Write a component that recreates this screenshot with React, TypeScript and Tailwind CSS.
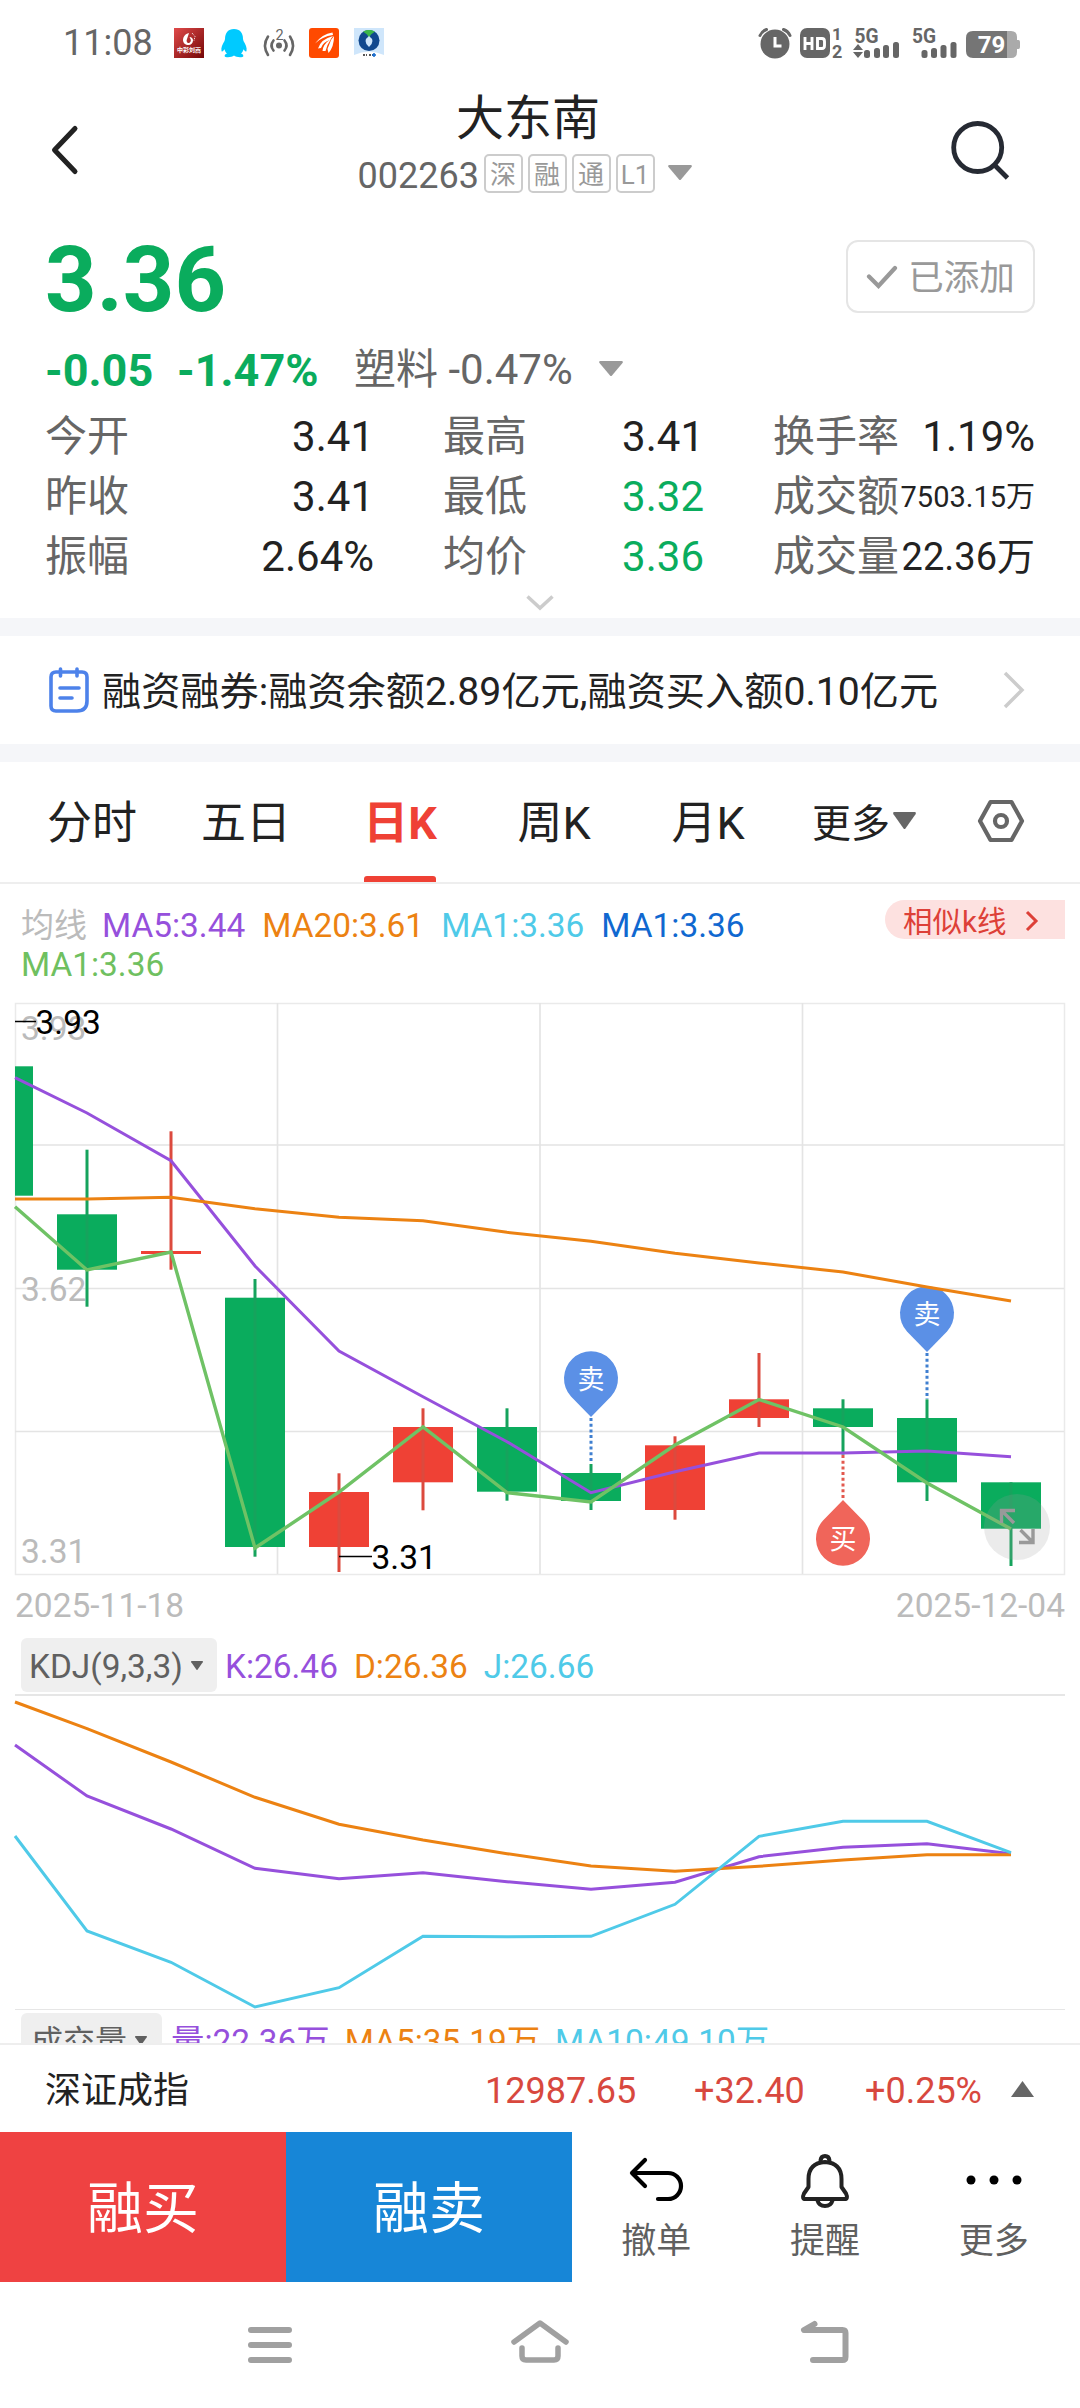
import type { ReactNode } from "react";

const GREEN = "#0aac5d";
const RED = "#ef4135";

type Candle = { x: number; top: number; bottom: number; high: number; low: number; up?: boolean };

const candles: Candle[] = [
  { x: 3, top: 1066.3, bottom: 1195.7, high: 1066.3, low: 1195.7 },
  { x: 87, top: 1214.3, bottom: 1269.7, high: 1149.7, low: 1306.7 },
  { x: 171, top: 1251, bottom: 1254, high: 1131.3, low: 1269.7, up: true },
  { x: 255, top: 1297.7, bottom: 1547, high: 1279, low: 1556.7 },
  { x: 339, top: 1492, bottom: 1547, high: 1473.3, low: 1572, up: true },
  { x: 423, top: 1427, bottom: 1482.3, high: 1408.3, low: 1510.3, up: true },
  { x: 507, top: 1427, bottom: 1491.7, high: 1408.3, low: 1500.7 },
  { x: 591, top: 1473, bottom: 1501, high: 1464, low: 1510 },
  { x: 675, top: 1445.3, bottom: 1510, high: 1436.3, low: 1519.7, up: true },
  { x: 759, top: 1399.3, bottom: 1418, high: 1353, low: 1427, up: true },
  { x: 843, top: 1408.3, bottom: 1427, high: 1399.3, low: 1454.7 },
  { x: 927, top: 1418, bottom: 1482.3, high: 1399.3, low: 1501 },
  { x: 1011, top: 1482.3, bottom: 1528.7, high: 1482.3, low: 1566 },
];

const xs = [15, 87, 171, 255, 339, 423, 507, 591, 675, 759, 843, 927, 1011];
const line = (ys: number[]) => ys.map((y, i) => `${xs[i]},${y}`).join(" ");

const ma1 = line([1206.7, 1270, 1252, 1548, 1492, 1427, 1492.7, 1502, 1445, 1399.5, 1427, 1483, 1529]);
const ma5 = line([1077.7, 1113, 1160.7, 1266, 1351, 1396.7, 1441.7, 1492.7, 1471.7, 1453, 1453, 1451, 1456.7]);
const ma20 = line([1199, 1199, 1197.3, 1208.7, 1217.3, 1220.7, 1232.3, 1241.3, 1253.3, 1263, 1272, 1287, 1301]);
const kLine = line([1745, 1796, 1829, 1868.3, 1878.7, 1872.7, 1881.7, 1889.3, 1882.3, 1856.7, 1847.3, 1843.7, 1853.7]);
const dLine = line([1702, 1728.7, 1762, 1797.3, 1824.3, 1840, 1853.7, 1866, 1871.3, 1866.3, 1860, 1854.7, 1854.7]);
const jLine = line([1836, 1931, 1962.3, 2007, 1987.7, 1936.3, 1936.7, 1936.3, 1904.3, 1836.3, 1821.3, 1821.3, 1852.7]);

function Caret({ w = 24, h = 15, color = "#999", up = false }: { w?: number; h?: number; color?: string; up?: boolean }) {
  return (
    <svg width={w} height={h} viewBox="0 0 24 15" preserveAspectRatio="none" className="block shrink-0">
      <path d={up ? "M0 15h24L12 0z" : "M1 0h22q1.500 .5 .5 2L13 14.500q-1 1-2 0L.5 2Q-.5.5 1 0z"} fill={color} />
    </svg>
  );
}

function StatusBar() {
  return (
    <div className="flex h-[86px] items-center justify-between pl-[63px] pr-[60px] text-[#666]">
      <div className="flex items-center">
        <span className="w-[111px] text-[36px] leading-none">11:08</span>
        <svg width="30" height="30" viewBox="0 0 30 30" className="overflow-visible">
          <defs>
            <linearGradient id="wine" x1="0" y1="0" x2="1" y2="1">
              <stop offset="0" stopColor="#e04a4a" />
              <stop offset="1" stopColor="#740606" />
            </linearGradient>
          </defs>
          <rect width="30" height="30" fill="url(#wine)" />
          <path d="M15 5c-4 1-6 4-6 7 0 3 2.500 5 5.500 5 2.500 0 4.500-2 4.500-4.500 0-2-1.500-3.500-3.500-3.500l1 2c1 2-.5 4-2 4s-2.500-2-1.500-4z" fill="#fff" />
          <path d="M18 5l3 3.500-1 4" stroke="#fff" strokeWidth="1" strokeDasharray="1 1" fill="none" />
          <text x="15" y="23.500" textAnchor="middle" fontSize="6" fontWeight="700" fill="#fff">中彩刘嵩</text>
        </svg>
        <svg width="28" height="30" viewBox="0 0 28 30" className="ml-4">
          <path d="M14 1C8 1 5 5 5 11l-.5 2C2.500 16 .8 20 1.500 23c.6 1.400 2-.2 3-1.700.4 1.800 1.300 3.200 2.500 4.300-1.500.5-2.500 1.300-2.300 2.600C5 29.600 12 29.500 14 27.500c2 2 9 2.100 9.300.7.200-1.300-.8-2.100-2.300-2.600 1.200-1.100 2.100-2.500 2.500-4.300 1 1.500 2.400 3.100 3 1.700.7-3-1-7-3-10l-.5-2c0-6-3-10-9-10z" fill="#00caff" />
        </svg>
        <svg width="32" height="32" viewBox="0 0 32 32" fill="none" stroke="#666" strokeWidth="2.600" strokeLinecap="round" className="ml-[15px] overflow-visible">
          <circle cx="16" cy="18.500" r="3" fill="#666" stroke="none" />
          <path d="M10.500 13.500q-4 5 0 10M21.500 13.500q4 5 0 10M5 9.500q-6 9 0 18.500M27 9.500q6 9 0 18.500" />
          <text x="16.500" y="12.500" textAnchor="middle" fontSize="14.500" fill="#666" stroke="none">2</text>
        </svg>
        <svg width="30" height="30" viewBox="0 0 30 30" className="ml-[14px]">
          <rect width="30" height="30" rx="3" fill="#ff4a00" />
          <path d="M6 15.500Q13 6 23.500 4.500L24 7Q13 8.500 6 15.500z" fill="#fff" />
          <path d="M9 20.500Q12 11 24 8L21 12Q14 14 12 20z" fill="#fff" />
          <path d="M13.500 23Q14 16 22 11L18.500 17l-2 6z" fill="#fff" />
          <path d="M19.500 25l-1-4L22 12l3-4q0 11-5.500 17z" fill="#fff" />
        </svg>
        <svg width="30" height="30" viewBox="0 0 30 30" className="ml-[15px]">
          <rect width="30" height="27" fill="#cfe6fb" />
          <path d="M0 27Q15 20 30 27v3H0z" fill="#fff" />
          <circle cx="15" cy="12.500" r="10.500" fill="#11488e" />
          <path d="M9 3.500L13 2h4l4 1.500-4 3-2 3-2-3z" fill="#3bb54a" />
          <path d="M15 8q7 5 0 11-7-6 0-11z" fill="#cfe6fb" />
          <path d="M9 27h4M15 27h4" stroke="#222" strokeWidth="1.500" strokeDasharray="2 1" />
          <path d="M18 27h4M20 25v4" stroke="#1268cc" strokeWidth="1.500" />
        </svg>
      </div>
      <div className="flex items-center">
        <svg width="34" height="32" viewBox="0 0 34 32" className="mr-[8px]">
          <circle cx="17" cy="17" r="14.500" fill="#666" />
          <path d="M2 8.500Q4 4 8.500 2.500M32 8.500Q30 4 25.500 2.500" stroke="#666" strokeWidth="3" fill="none" strokeLinecap="round" />
          <path d="M17 10v9h6.500" stroke="#fff" strokeWidth="3" fill="none" />
        </svg>
        <svg width="43" height="32" viewBox="0 0 43 32" className="mr-[10px] overflow-visible">
          <rect x="0" y="1" width="30" height="30" rx="7" fill="#666" />
          <path d="M5 10v13M12 10v13M5 16.500h7M17.500 11.500v10h4.500q2.500 0 2.500-3v-4q0-3-2.500-3z" stroke="#fff" strokeWidth="2.900" fill="none" />
          <text x="32" y="13" fontSize="17" fontWeight="700" fill="#666">1</text>
          <text x="32" y="31" fontSize="18" fontWeight="700" fill="#666">2</text>
        </svg>
        <svg width="47" height="32" viewBox="0 0 47 32" className="mr-[12px] overflow-visible" fill="#666">
          <text x="1.500" y="15.500" fontSize="20" fontWeight="700" textLength="24" lengthAdjust="spacingAndGlyphs">5G</text>
          <path d="M5 17l5 6H0zM5 31l5-6H0z" />
          <rect x="11" y="23" width="6" height="8" rx="2.500" />
          <rect x="21" y="21" width="6" height="10" rx="2.500" />
          <rect x="30" y="18" width="6" height="13" rx="2.500" />
          <rect x="40" y="15" width="6" height="16" rx="2.500" />
        </svg>
        <svg width="45" height="32" viewBox="0 0 45 32" className="mr-[9px] overflow-visible" fill="#666">
          <text x="0" y="15.500" fontSize="20" fontWeight="700" textLength="24" lengthAdjust="spacingAndGlyphs">5G</text>
          <rect x="9.500" y="23" width="6" height="8" rx="2.500" />
          <rect x="19" y="21" width="6" height="10" rx="2.500" />
          <rect x="28.500" y="18" width="6" height="13" rx="2.500" />
          <rect x="38.500" y="15" width="6" height="16" rx="2.500" />
        </svg>
        <svg width="54" height="32" viewBox="0 0 54 32" className="overflow-visible">
          <path d="M39 4h6q6 0 6 6v3h1.500q1.500 0 1.500 2v5q0 2-1.500 2H51v3q0 6-6 6h-6z" fill="#aaa" />
          <path d="M7 4h34v27H7q-7 0-7-7V11q0-7 7-7z" fill="#757575" />
          <text x="25.500" y="26" textAnchor="middle" fontSize="24" fontWeight="700" fill="#fff">79</text>
        </svg>
      </div>
    </div>
  );
}

function Header() {
  return (
    <div className="flex h-[142px] justify-between pl-[50px] pr-[69px]">
      <svg width="30" height="52" viewBox="0 0 30 52" className="mt-[38px]" fill="none" stroke="#222" strokeWidth="5" strokeLinecap="round" strokeLinejoin="round">
        <path d="M25 4.500L4.500 26 25 47.500" />
      </svg>
      <div className="ml-[20px] flex flex-col items-center pt-[8px]">
        <h1 className="ml-[7px] text-[48px] leading-[50px] text-[#222]">大东南</h1>
        <div className="mt-[10px] flex h-[39px] items-center">
          <span className="mr-[4px] mt-[4px] w-[122px] text-[36px] leading-none text-[#666]">002263</span>
          {["深", "融", "通", "L1"].map((t) => (
            <span key={t} className="mr-[5px] flex h-[39px] w-[39px] items-center justify-center rounded-[5px] border-2 border-[#ccc] pt-[2px] text-[26px] leading-none text-[#999]">{t}</span>
          ))}
          <span className="ml-[8px] mt-[-2px]"><Caret /></span>
        </div>
      </div>
      <svg width="62" height="62" viewBox="0 0 62 62" className="mt-[33px]" fill="none" stroke="#262a33" strokeWidth="4.800">
        <circle cx="28.700" cy="28.500" r="24" />
        <path d="M46 46.500L58.500 59" />
      </svg>
    </div>
  );
}

function Stat({ label, value, valueClass = "text-[42px] text-[#222]" }: { label: string; value: string; valueClass?: string }) {
  return (
    <div className="flex h-[60px] items-center justify-between whitespace-nowrap">
      <span className="text-[42px] leading-none text-[#666]">{label}</span>
      <span className={`leading-none ${valueClass}`}>{value}</span>
    </div>
  );
}

function Quote() {
  return (
    <div className="h-[390px] px-[45px]">
      <div className="flex h-[108px] items-start justify-between">
        <span className="mt-[8px] text-[90px] font-bold leading-[90px] text-[#0aac5d]">3.36</span>
        <div className="mt-[12px] flex h-[73px] w-[189px] items-center justify-center rounded-[12px] border-2 border-[#e5e5e5]">
          <svg width="32" height="24" viewBox="0 0 32 24" fill="none" stroke="#999" strokeWidth="4.200" strokeLinecap="round">
            <path d="M3 11.500l9.500 9.500L29 3" />
          </svg>
          <span className="ml-[10px] mt-[4px] text-[35.500px] leading-none text-[#999]">已添加</span>
        </div>
      </div>
      <div className="flex h-[71px] items-center pb-[3px]">
        <span className="w-[132px] text-[45px] font-bold leading-none text-[#0aac5d]">-0.05</span>
        <span className="w-[177px] text-[45px] font-bold leading-none text-[#0aac5d]">-1.47%</span>
        <span className="w-[245px] whitespace-nowrap text-[42px] leading-none text-[#666]">塑料 -0.47%</span>
        <span className="mt-[-4px]"><Caret /></span>
      </div>
      <div className="grid grid-cols-[398px_330px_262px]">
        <div className="w-[329px]"><Stat label="今开" value="3.41" /></div>
        <div className="w-[261px]"><Stat label="最高" value="3.41" /></div>
        <Stat label="换手率" value="1.19%" />
        <div className="w-[329px]"><Stat label="昨收" value="3.41" /></div>
        <div className="w-[261px]"><Stat label="最低" value="3.32" valueClass="text-[42px] text-[#0aac5d]" /></div>
        <Stat label="成交额" value="7503.15万" valueClass="text-[29px] text-[#222]" />
        <div className="w-[329px]"><Stat label="振幅" value="2.64%" /></div>
        <div className="w-[261px]"><Stat label="均价" value="3.36" valueClass="text-[42px] text-[#0aac5d]" /></div>
        <Stat label="成交量" value="22.36万" valueClass="text-[38px] text-[#222]" />
      </div>
      <svg width="28" height="16" viewBox="0 0 28 16" className="mx-auto mt-[8px] block" fill="none" stroke="#ccc" strokeWidth="3.500">
        <path d="M1.500 1.500L14 13 26.500 1.500" />
      </svg>
    </div>
  );
}

function Notice() {
  return (
    <div className="flex h-[108px] items-center pl-[48px] pr-[55px]">
      <svg width="42" height="46" viewBox="0 0 42 46" fill="none" stroke="#4d82ea" strokeWidth="3.600" strokeLinecap="round">
        <path d="M8 5h26q5 0 5 5v24q0 10-10 10H8q-5 0-5-5V10q0-5 5-5zM12.500 2v7M29 2v7M12 21h19M12 31h12" />
      </svg>
      <span className="ml-[12px] mt-[5px] whitespace-nowrap text-[39.200px] leading-none text-[#222]">融资融券:融资余额2.89亿元,融资买入额0.10亿元</span>
      <svg width="22" height="38" viewBox="0 0 22 38" className="ml-auto" fill="none" stroke="#ccc" strokeWidth="3.500">
        <path d="M2 2l17 17L2 36" />
      </svg>
    </div>
  );
}

function Tabs() {
  return (
    <div className="flex h-[122px] border-b-2 border-[#eee] pl-[15px] text-[#222]">
      {["分时", "五日", "日K", "周K", "月K"].map((t) => (
        <div key={t} className="flex w-[154px] flex-col items-center">
          <span className={t === "日K" ? "mt-[39px] h-[75px] text-[45px] font-bold leading-[45px] text-[#ef4135]" : "mt-[39px] h-[75px] text-[45px] leading-[45px]"}>{t}</span>
          {t === "日K" && <span className="h-[6px] w-[72px] rounded-t-[3px] bg-[#ef4135]" />}
        </div>
      ))}
      <div className="ml-[27px] flex h-[120px] items-center">
        <span className="mt-[4px] w-[81px] whitespace-nowrap text-[39px] leading-none">更多</span>
        <span className="mr-[61px] mt-[-4px]"><Caret w={23} color="#666" h={17} /></span>
        <svg width="48" height="44" viewBox="0 0 48 44" className="mt-[-2px]" fill="none" stroke="#666" strokeWidth="4.200" strokeLinejoin="round">
          <path d="M13.500 3h21L45 22 34.500 41h-21L3 22z" />
          <circle cx="24" cy="22" r="6" />
        </svg>
      </div>
    </div>
  );
}

function MaLegend() {
  return (
    <div className="flex h-[116px] justify-between pl-[21px] pr-[15px] pt-[22px] text-[33.400px] leading-[39px]">
      <div className="flex w-[760px] flex-wrap content-start gap-x-[17px] whitespace-nowrap">
        <span className="w-[64px] text-[33px] text-[#bbb]">均线</span>
        <span className="text-[#9650dc]">MA5:3.44</span>
        <span className="text-[#ec8212]">MA20:3.61</span>
        <span className="text-[#4fcae8]">MA1:3.36</span>
        <span className="text-[#1068d0]">MA1:3.36</span>
        <span className="text-[#6fc060]">MA1:3.36</span>
      </div>
      <div className="mt-[-6px] flex h-[39px] w-[180px] items-center rounded-l-full bg-[#fde1e0] pl-[18px] text-[29.500px] leading-none text-[#dd4038]">
        <span className="mt-[6px] whitespace-nowrap">相似k线</span>
        <svg width="14" height="22" viewBox="0 0 14 22" className="ml-[19px] mt-[2px]" fill="none" stroke="#dd4038" strokeWidth="3">
          <path d="M2 2l9 9-9 9" />
        </svg>
      </div>
    </div>
  );
}

function Pin({ x, tip, up, color, children }: { x: number; tip: number; up?: boolean; color: string; children: string }) {
  const s = up ? 1 : -1;
  const cy = tip + s * 38.500;
  return (
    <g>
      <path d={`M${x} ${tip}L${x - 20} ${tip + s * 20.500}A27 27 0 1 ${up ? 0 : 1} ${x + 20} ${tip + s * 20.500}Z`} fill={color} />
      <text x={x} y={cy + 10.500} textAnchor="middle" fontSize="27" fill="#fff">{children}</text>
    </g>
  );
}

function CandleChart() {
  return (
    <svg width="1080" height="580" viewBox="0 1000 1080 580" className="block">
      <path d="M15.500 1003.500H1064.500V1574.500H15.500Z" fill="none" stroke="#eaeaea" strokeWidth="1.500" />
      <path d="M15 1145H1064M15 1288.500H1064M15 1431.500H1064M277.500 1003V1574M540 1003V1574M802.500 1003V1574" stroke="#e4e4e4" strokeWidth="1.700" />
      <g fontSize="33.500" fill="#bbb">
        <text x="21" y="1040">3.93</text>
        <text x="21" y="1301">3.62</text>
        <text x="21" y="1563">3.31</text>
      </g>
      <clipPath id="plot"><rect x="15" y="1003" width="1050" height="572" /></clipPath>
      <g clipPath="url(#plot)">
        {candles.map((c) => (
          <g key={c.x} fill={c.up ? RED : GREEN}>
            <rect x={c.x - 30} y={c.top} width="60" height={c.bottom - c.top} />
            <rect x={c.x - 1.500} y={c.high} width="3" height={c.low - c.high} fill={c.up ? "#dc4a3e" : "#16a35d"} />
          </g>
        ))}
      </g>
      <Pin x={591} tip={1417} color="#5b90e6">卖</Pin>
      <Pin x={927} tip={1352} color="#5b90e6">卖</Pin>
      <Pin x={843} tip={1500} up color="#f0655a">买</Pin>
      <g fill="none" strokeWidth="3">
        <g strokeDasharray="3 2.700">
          <path d="M591 1418V1463M927 1353V1399" stroke="#3f7fd0" />
          <path d="M843 1455V1500" stroke="#e2584e" />
        </g>
        <polyline points={ma5} stroke="#9650dc" />
        <polyline points={ma20} stroke="#ec8212" />
        <polyline points={ma1} stroke="#6fc265" strokeWidth="3.400" />
      </g>
      <path d="M15 1021.500H36M339 1556.500H372" stroke="#000" strokeWidth="1.500" />
      <g fontSize="33.500" fill="#000">
        <text x="35.500" y="1034">3.93</text>
        <text x="371.500" y="1569">3.31</text>
      </g>
      <circle cx="1017" cy="1527" r="33" fill="#999" fillOpacity=".2" />
      <path d="M1015 1510.500H1001.500V1523M1002 1511l12 12M1019 1542.500H1033V1529M1032.500 1542l-12-12" fill="none" stroke="#999" strokeWidth="3.400" />
    </svg>
  );
}

function Chip({ children, className }: { children: string; className: string }) {
  return (
    <div className={`flex h-[54px] items-center justify-between rounded-[6px] bg-[#efefef] text-[#606060] ${className}`}>
      <span className="mt-[4px] whitespace-nowrap leading-none">{children}</span>
      <Caret w={12} h={9} color="#606060" />
    </div>
  );
}

function Indicator({ children, className }: { children: ReactNode; className: string }) {
  return <div className={`flex items-start pl-[21px] text-[33.400px] ${className}`}>{children}</div>;
}

function Action({ label, children }: { label: string; children: ReactNode }) {
  return (
    <div className="flex flex-1 flex-col items-center pt-[19px]">
      <svg width="58" height="60" viewBox="0 0 58 60" fill="none" stroke="#111" strokeWidth="4.200" strokeLinecap="round" strokeLinejoin="round">{children}</svg>
      <span className="mt-[13px] text-[35px] leading-[36px] text-[#606060]">{label}</span>
    </div>
  );
}

function BottomBar() {
  return (
    <div>
      <div className="flex h-[89px] items-center border-t-2 border-[#eee] pl-[45px] pr-[46px] pt-[4px] text-[36px] leading-none text-[#d8483e]">
        <span className="w-[440px] text-[#222]">深证成指</span>
        <span className="w-[209px]">12987.65</span>
        <span className="w-[171px]">+32.40</span>
        <span>+0.25%</span>
        <span className="ml-auto mt-[-4px]"><Caret w={23} h={16} color="#666" up /></span>
      </div>
      <div className="flex h-[150px]">
        <button className="w-[286px] bg-[#ef4242] pt-[4px] text-[56px] leading-none text-white">融买</button>
        <button className="w-[286px] bg-[#1786d7] pt-[4px] text-[56px] leading-none text-white">融卖</button>
        <div className="flex flex-1 pr-[2px]">
          <Action label="撤单">
            <path d="M18 9L5 22l13 13M5 22h36a13 13 0 0 1 0 26H31" stroke="#000" />
          </Action>
          <Action label="提醒">
            <g stroke="#222" strokeWidth="4">
              <path d="M29 11Q12.500 12 12.500 28v8l-4.500 6.500q-2.500 5.500 1.500 5.500h39q4 0 1.500-5.500L45.500 36v-8Q45.500 12 29 11z" />
              <path d="M24.500 9.500q.5-4.500 4.500-4.500t4.500 4.500M21.500 49.500Q23 55 29 55t7.500-5.500" />
            </g>
          </Action>
          <Action label="更多">
            <g fill="#000" stroke="none">
              <circle cx="6" cy="29" r="4.500" />
              <circle cx="29" cy="29" r="4.500" />
              <circle cx="52" cy="29" r="4.500" />
            </g>
          </Action>
        </div>
      </div>
      <div className="flex h-[126px] justify-between pl-[247px] pr-[229px] pt-[34px]">
        <svg width="46" height="52" viewBox="0 0 46 52" stroke="#a0a0a0" strokeWidth="6" strokeLinecap="round">
          <path d="M4 14h38M4 29h38M4 44h38" />
        </svg>
        <svg width="60" height="52" viewBox="0 0 60 52" className="mr-[13px]" fill="none" stroke="#a0a0a0" strokeWidth="5.500" strokeLinecap="round" strokeLinejoin="round">
          <path d="M4 26L30 7l26 19M12 32v8q0 4 4 4h28q4 0 4-4v-8" />
        </svg>
        <svg width="52" height="52" viewBox="0 0 52 52" fill="none" stroke="#a0a0a0" strokeWidth="6" strokeLinecap="round" strokeLinejoin="round">
          <path d="M15.500 8L5 14H43.500q3 0 3 3v24q0 3-3 3H14" />
        </svg>
      </div>
    </div>
  );
}

export default function App() {
  return (
    <div className="h-[2408px] w-[1080px] overflow-hidden bg-white [font-family:Roboto,'Noto_Sans_CJK_SC',sans-serif]">
      <StatusBar />
      <Header />
      <Quote />
      <div className="h-[18px] bg-[#f5f6f9]" />
      <Notice />
      <div className="h-[18px] bg-[#f5f6f9]" />
      <Tabs />
      <MaLegend />
      <CandleChart />
      <div className="flex h-[58px] justify-between px-[15px] pt-[8px] text-[33.500px] leading-[36px] text-[#bbb]">
        <span>2025-11-18</span>
        <span>2025-12-04</span>
      </div>
      <Indicator className="h-[56px] leading-[57px]">
        <Chip className="w-[196px] pl-[8px] pr-[14px]">KDJ(9,3,3)</Chip>
        <span className="ml-[8px] text-[#9650dc]">K:26.46</span>
        <span className="ml-[16px] text-[#ec8212]">D:26.36</span>
        <span className="ml-[16px] text-[#4fcae8]">J:26.66</span>
      </Indicator>
      <svg width="1080" height="317" viewBox="0 1694 1080 317" className="block" fill="none" strokeWidth="3">
        <path d="M15 1695H1065" stroke="#e6e6e6" strokeWidth="2" />
        <path d="M15 2009.500H1065" stroke="#e6e6e6" strokeWidth="1" />
        <polyline points={kLine} stroke="#9650dc" />
        <polyline points={dLine} stroke="#ec8212" />
        <polyline points={jLine} stroke="#4fcae8" />
      </svg>
      <Indicator className="h-[32px] overflow-hidden pt-[2px] leading-[57px]">
        <Chip className="w-[141px] shrink-0 pl-[10px] pr-[15px] text-[32px]">成交量</Chip>
        <span className="ml-[9px] whitespace-nowrap text-[#9650dc]">量:22.36万</span>
        <span className="ml-[15px] whitespace-nowrap text-[#ec8212]">MA5:35.19万</span>
        <span className="ml-[15px] whitespace-nowrap text-[#4fcae8]">MA10:49.10万</span>
      </Indicator>
      <BottomBar />
    </div>
  );
}
